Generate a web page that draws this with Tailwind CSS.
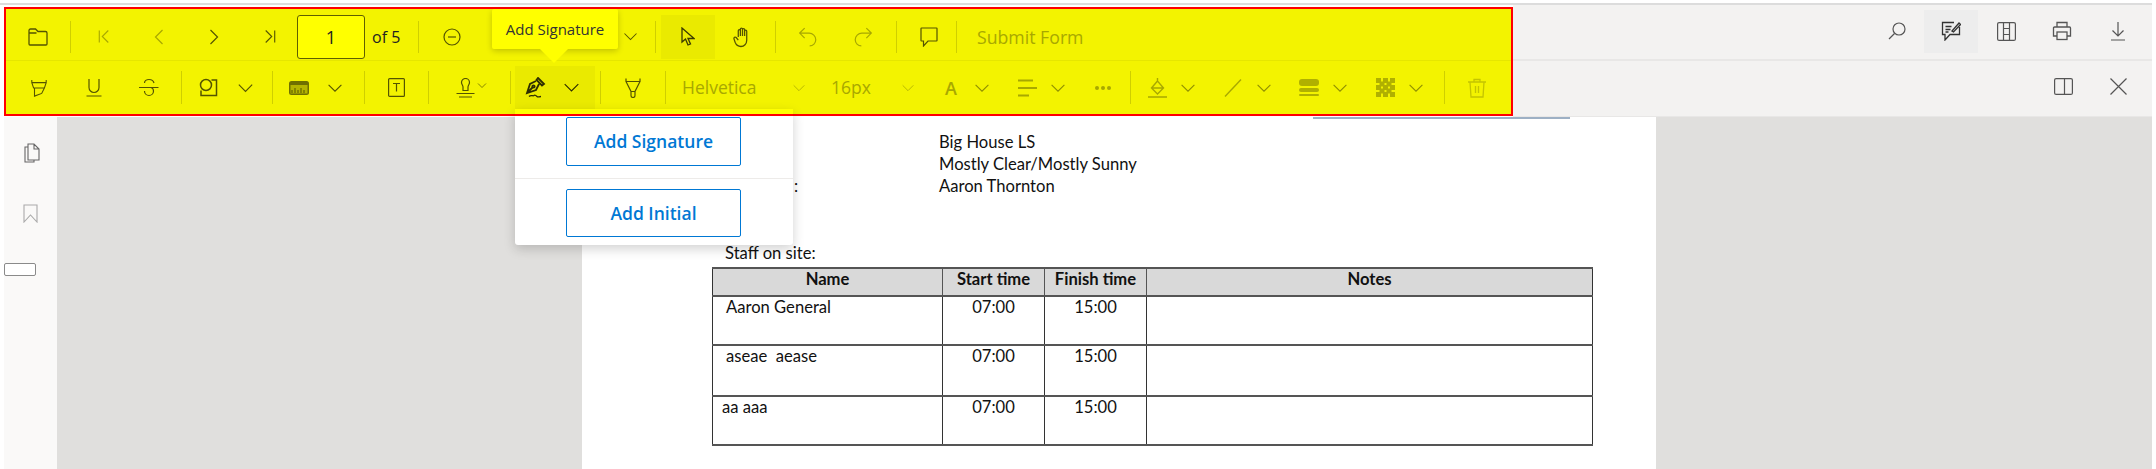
<!DOCTYPE html>
<html lang="en">
<head>
  <meta charset="UTF-8">
  <title>PDF Viewer</title>
  <script src="https://cdn.jsdelivr.net/npm/@tailwindcss/browser@4"></script>
</head>
<body class="bg-white font-['Open_Sans',sans-serif]">
  <!-- shared glyphs -->
  <svg class="hidden">
    <symbol id="chev" viewBox="0 0 20 12"><path d="M2 2l8 8 8-8" fill="none" stroke="currentColor" stroke-width="1.400"/></symbol>
  </svg>

  <div class="relative w-[2156px] h-[469px] overflow-hidden">
    <!-- toolbar area -->
    <header class="mt-[3px] w-[2152px] h-[114px] flex border-t-2 border-[#dcdcdc]">
      <div class="ml-[4px] mt-[2px] w-[1509px] h-[109px] border-2 border-[#ff0000] bg-[#f3f300] flex flex-col shrink-0">

        <!-- row 1 -->
        <div class="h-[52px] pt-[4px] flex items-center border-b border-[#e6e600] text-[#545400]">
          <div class="w-[64px] flex justify-center">
            <svg class="w-[20px] h-[18px]" viewBox="0 0 20 18" fill="none" stroke="currentColor" stroke-width="1.300"><path d="M1 5V2.500A1.500 1.500 0 0 1 2.500 1h5L10 3.500h7.500A1.500 1.500 0 0 1 19 5v11a1 1 0 0 1-1 1H2a1 1 0 0 1-1-1V5h7.500"/></svg>
          </div>
          <div class="w-px h-[32px] bg-[#cfcf00]"></div>
          <div class="ml-[5px] w-[55px] flex justify-center text-[#a8a800]">
            <svg class="w-[12px] h-[15px]" viewBox="0 0 14 16" fill="none" stroke="currentColor" stroke-width="1.300"><path d="M1.500 1v14M12 1L5 8l7 7"/></svg>
          </div>
          <div class="w-[55px] flex justify-center text-[#a8a800]">
            <svg class="w-[10px] h-[16px]" viewBox="0 0 10 16" fill="none" stroke="currentColor" stroke-width="1.200"><path d="M8.500 1L1.500 8l7 7"/></svg>
          </div>
          <div class="w-[55px] flex justify-center">
            <svg class="w-[10px] h-[16px]" viewBox="0 0 10 16" fill="none" stroke="currentColor" stroke-width="1.200"><path d="M1.500 1l7 7-7 7"/></svg>
          </div>
          <div class="ml-px w-[55px] flex justify-center">
            <svg class="w-[12px] h-[15px]" viewBox="0 0 14 16" fill="none" stroke="currentColor" stroke-width="1.300"><path d="M12.500 1v14M2 1l7 7-7 7"/></svg>
          </div>
          <div class="w-[68px] h-[44px] mt-px border border-[#5f5f00] rounded-[3px] bg-[#ffff00] flex items-center justify-center text-[18px] text-[#222]">1</div>
          <div class="ml-[7px] w-[28px] text-[16px] leading-none whitespace-nowrap text-[#222]">of 5</div>
          <div class="ml-[18px] w-px h-[32px] bg-[#cfcf00]"></div>
          <div class="ml-[5px] w-[55px] flex justify-center">
            <svg class="w-[18px] h-[18px]" viewBox="0 0 18 18" fill="none" stroke="currentColor" stroke-width="1.200"><circle cx="9" cy="9" r="8"/><path d="M5 9h8"/></svg>
          </div>
          <svg class="ml-[144px] w-[15px] h-[9px]" viewBox="0 0 20 12"><use href="#chev"/></svg>
          <div class="ml-[17px] w-px h-[32px] bg-[#cfcf00]"></div>
          <div class="ml-[5px] w-[54px] h-[44px] mt-px bg-[#eaea00] flex items-center justify-center text-[#3a3a00]">
            <svg class="w-[14px] h-[20px]" viewBox="0 0 14 20" fill="none" stroke="currentColor" stroke-width="1.300"><path d="M1 1v14l3.500-3 2.500 6 2.500-1-2.500-5.500H13z"/></svg>
          </div>
          <div class="w-[54px] flex justify-center">
            <svg class="w-[19px] h-[22px]" viewBox="0 0 18 20" fill="none" stroke="currentColor" stroke-width="1.200"><path d="M5 10V4a1 1 0 0 1 2 0V9M7 9V2.500a1 1 0 0 1 2 0V9M9 9V3a1 1 0 0 1 2 0v6M11 9V4.500a1 1 0 0 1 2 0V13c0 3.500-2.500 6-5.500 6C4.500 19 3 17.500 2 15L1 12c-.5-1.500 1-2.500 2-1.500L5 13"/></svg>
          </div>
          <div class="ml-[6px] w-px h-[32px] bg-[#cfcf00]"></div>
          <div class="ml-[4px] w-[55px] flex justify-center text-[#a8a800]">
            <svg class="w-[20px] h-[20px]" viewBox="0 0 18 18" fill="none" stroke="currentColor" stroke-width="1.100"><path d="M6 1L1.500 5.500 6 10M1.500 5.500H10a6 6 0 0 1 6 6v0a5.500 5.500 0 0 1-5.500 5.500"/></svg>
          </div>
          <div class="w-[55px] flex justify-center text-[#a8a800]">
            <svg class="w-[20px] h-[20px]" viewBox="0 0 18 18" fill="none" stroke="currentColor" stroke-width="1.100"><path d="M12 1l4.500 4.500L12 10M16.500 5.500H8a6 6 0 0 0-6 6v0A5.500 5.500 0 0 0 7.500 17"/></svg>
          </div>
          <div class="ml-[6px] w-px h-[32px] bg-[#cfcf00]"></div>
          <div class="ml-[4px] w-[55px] flex justify-center">
            <svg class="w-[20px] h-[20px]" viewBox="0 0 20 20" fill="none" stroke="currentColor" stroke-width="1.200"><path d="M2.500 1h15a.5.5 0 0 1 .5.5v12a.5.5 0 0 1-.5.5H9l-4.500 5v-5h-2a.5.5 0 0 1-.5-.5v-12a.5.500 0 0 1 .5-.5z"/></svg>
          </div>
          <div class="w-px h-[32px] bg-[#cfcf00]"></div>
          <div class="ml-[20px] mt-[2px] text-[17.7px] leading-none whitespace-nowrap text-[#a8a800]">Submit Form</div>
        </div>

        <!-- row 2 -->
        <div class="flex-1 flex items-center text-[#545400]">
          <div class="ml-[5px] w-[55px] flex justify-center">
            <svg class="w-[18px] h-[20px]" viewBox="0 0 20 20" fill="none" stroke="currentColor" stroke-width="1.200"><path d="M2 1v3h16V1M2 4l2 6h12l2-6M5 10v9l8-3 3-6"/></svg>
          </div>
          <div class="w-[55px] flex justify-center">
            <svg class="w-[16px] h-[19px]" viewBox="0 0 16 19" fill="none" stroke="currentColor" stroke-width="1.200"><path d="M3 1v8.500a5 5 0 0 0 10 0V1M.5 18h15"/></svg>
          </div>
          <div class="w-[55px] flex justify-center">
            <svg class="w-[20px] h-[19px]" viewBox="0 0 20 19" fill="none" stroke="currentColor" stroke-width="1.200"><path d="M0 9.500h19.500M15 5c-.5-2-2.500-3.500-5-3.500S5.500 3 5.500 5M5.500 13c0 2.500 2 4.500 4.500 4.500s4.500-2 4.500-4.500c0-1.500-1-3-2.500-3.500"/></svg>
          </div>
          <div class="ml-[5px] w-px h-[33px] bg-[#cfcf00]"></div>
          <div class="w-[52px] flex justify-center">
            <svg class="w-[19px] h-[19px]" viewBox="0 0 19 19" fill="none" stroke="currentColor" stroke-width="1.500"><circle cx="7" cy="7" r="5.500"/><path d="M12.500 2H17.500V17.500H2V12.500"/></svg>
          </div>
          <svg class="w-[17px] h-[10px] mx-[2.5px]" viewBox="0 0 20 12"><use href="#chev"/></svg>
          <div class="ml-[16px] w-px h-[33px] bg-[#cfcf00]"></div>
          <div class="w-[52px] flex justify-center">
            <svg class="w-[20px] h-[14px]" viewBox="0 0 20 14"><rect width="20" height="14" rx="2.500" fill="#6f6f00"/><rect x="1.500" y="4" width="17" height="8.500" fill="#b4b400"/><path d="M3 12V9M6 12V7M9 12V9M12 12V7M15 12V9" fill="none" stroke="#545400" stroke-width="1"/></svg>
          </div>
          <svg class="w-[16px] h-[10px] mx-[2px]" viewBox="0 0 20 12"><use href="#chev"/></svg>
          <div class="ml-[19px] w-px h-[33px] bg-[#cfcf00]"></div>
          <div class="w-[62px] flex justify-center">
            <svg class="w-[17px] h-[19px]" viewBox="0 0 17 19" fill="none" stroke="currentColor" stroke-width="1.200"><rect x=".6" y=".6" width="15.800" height="17.800" rx="1"/><path d="M5 5.500h7M8.500 5.500v8"/></svg>
          </div>
          <div class="ml-px w-px h-[33px] bg-[#cfcf00]"></div>
          <div class="ml-[24px] w-[24px] flex justify-center">
            <svg class="w-[21px] h-[20px]" viewBox="0 0 21 20" fill="none" stroke="currentColor" stroke-width="1.200"><path d="M8 12.500V9C8 7.500 6.500 6.500 6.500 4.500a4 4 0 0 1 8 0c0 2-1.500 3-1.500 4.500v3.500zM1.500 15.500h18M4 19h13"/></svg>
          </div>
          <svg class="w-[10px] h-[7px] -mt-[5px]" viewBox="0 0 20 12"><use href="#chev"/></svg>
          <div class="ml-[23px] w-px h-[33px] bg-[#cfcf00]"></div>
          <div class="ml-[4px] w-[80px] h-[43px] bg-[#eaea00] flex items-center text-[#2e2e00]">
            <div class="w-[40px] flex justify-center">
              <svg class="w-[21px] h-[21px]" viewBox="0 0 21 21" fill="none" stroke="currentColor" stroke-width="1.800"><path d="M13 1l6 6-2 1.500-5.500-5.500zM11 4L5 7 2 16l9-3 3-6M2 16l5.500-5.500"/><circle cx="8.500" cy="9.500" r="1.200"/><path d="M4 19.500c2-2 4 0 5-1s2 0 3 1 2 0 4 0" stroke-width="1.300"/></svg>
            </div>
            <svg class="ml-[8px] w-[17px] h-[11px]" viewBox="0 0 20 12"><use href="#chev"/></svg>
          </div>
          <div class="ml-[5px] w-px h-[33px] bg-[#cfcf00]"></div>
          <div class="w-[64px] flex justify-center">
            <svg class="w-[18px] h-[20px]" viewBox="0 0 18 20" fill="none" stroke="currentColor" stroke-width="1.200"><path d="M2 .5v3h14v-3M2 3.500l5 10v4a2 2 0 0 0 4 0v-4l5-10M7 13.500h4"/></svg>
          </div>
          <div class="w-px h-[33px] bg-[#cfcf00]"></div>

          <div class="ml-[16px] w-[75px] text-[17.5px] leading-none whitespace-nowrap text-[#a8a800]">Helvetica</div>
          <svg class="ml-[35px] w-[14px] h-[8px] text-[#b4b400]" viewBox="0 0 20 12"><use href="#chev"/></svg>
          <div class="ml-[25px] w-[41px] text-[17.5px] leading-none whitespace-nowrap text-[#a8a800]">16px</div>
          <svg class="ml-[29px] w-[14px] h-[8px] text-[#b4b400]" viewBox="0 0 20 12"><use href="#chev"/></svg>
          <div class="ml-[26px] w-[20px] text-center text-[18px] font-semibold leading-none text-[#a8a800]">A</div>
          <svg class="ml-[13px] w-[16px] h-[10px] text-[#8f8f00]" viewBox="0 0 20 12"><use href="#chev"/></svg>
          <div class="ml-[27px] w-[20px] flex justify-center text-[#a8a800]">
            <svg class="w-[19px] h-[18px]" viewBox="0 0 19 18" fill="none" stroke="currentColor" stroke-width="1.800"><path d="M0 1.500h15M0 9h19M0 16.500h11"/></svg>
          </div>
          <svg class="ml-[13px] w-[16px] h-[10px] text-[#8f8f00]" viewBox="0 0 20 12"><use href="#chev"/></svg>
          <div class="ml-[27px] w-[20px] flex justify-center gap-[2px]">
            <span class="w-[4px] h-[4px] rounded-full bg-[#a8a800]"></span><span class="w-[4px] h-[4px] rounded-full bg-[#a8a800]"></span><span class="w-[4px] h-[4px] rounded-full bg-[#a8a800]"></span>
          </div>
          <div class="ml-[17px] w-px h-[33px] bg-[#cfcf00]"></div>
          <div class="ml-[16px] w-[20px] flex justify-center text-[#a8a800]">
            <svg class="w-[19px] h-[20px]" viewBox="0 0 19 20" fill="none" stroke="currentColor" stroke-width="1.400"><path d="M9.500 0v3M9.500 3L3.500 10l6 6 6-6zM3.500 10h12M0 19h19"/></svg>
          </div>
          <svg class="ml-[13px] w-[16px] h-[10px] text-[#8f8f00]" viewBox="0 0 20 12"><use href="#chev"/></svg>
          <div class="ml-[27px] w-[20px] flex justify-center text-[#a8a800]">
            <svg class="w-[18px] h-[18px]" viewBox="0 0 18 18" fill="none" stroke="currentColor" stroke-width="1.400"><path d="M1 17.500L17 .5"/></svg>
          </div>
          <svg class="ml-[13px] w-[16px] h-[10px] text-[#8f8f00]" viewBox="0 0 20 12"><use href="#chev"/></svg>
          <div class="ml-[27px] w-[20px] flex justify-center">
            <div class="w-[20px] flex flex-col gap-[2px]">
              <div class="h-[7px] rounded-[3px] bg-[#b0b000]"></div>
              <div class="h-[4px] rounded-[2px] bg-[#b0b000]"></div>
              <div class="h-[2px] rounded-[1px] bg-[#b0b000]"></div>
            </div>
          </div>
          <svg class="ml-[13px] w-[16px] h-[10px] text-[#8f8f00]" viewBox="0 0 20 12"><use href="#chev"/></svg>
          <div class="ml-[27px] w-[20px] flex justify-center">
            <svg class="w-[19px] h-[19px]" viewBox="0 0 19 19" fill="#b0b000"><path d="M0 0h5v5H0zM7 0h5v5H7zM14 0h5v5h-5zM3.500 3.500h5v5h-5zM10.500 3.500h5v5h-5zM0 7h5v5H0zM7 7h5v5H7zM14 7h5v5h-5zM3.500 10.500h5v5h-5zM10.500 10.500h5v5h-5zM0 14h5v5H0zM7 14h5v5H7zM14 14h5v5h-5z"/></svg>
          </div>
          <svg class="ml-[13px] w-[16px] h-[10px] text-[#8f8f00]" viewBox="0 0 20 12"><use href="#chev"/></svg>
          <div class="ml-[20px] w-px h-[33px] bg-[#cfcf00]"></div>
          <div class="ml-[22px] w-[20px] flex justify-center text-[#c4c400]">
            <svg class="w-[18px] h-[20px]" viewBox="0 0 18 20" fill="none" stroke="currentColor" stroke-width="1.300"><path d="M0 4h18M6 4V1.500h6V4M2 4l1 15h12l1-15M7.500 8v7M10.500 8v7"/></svg>
          </div>
        </div>
      </div>

      <!-- right side of the toolbar -->
      <div class="flex-1 flex flex-col bg-[#f3f2f1] border-b border-[#e8e7e6] text-[#555]">
        <div class="h-[56px] pb-[2px] border-b-2 border-[#e8e7e6] flex items-center">
          <div class="ml-[357px] w-[54px] flex justify-center">
            <svg class="w-[18px] h-[18px]" viewBox="0 0 18 18" fill="none" stroke="currentColor" stroke-width="1.200"><circle cx="11" cy="7" r="6"/><path d="M6.500 11.500L1 17"/></svg>
          </div>
          <div class="w-[54px] h-[43px] bg-[#ededed] flex items-center justify-center text-[#333]">
            <svg class="w-[20px] h-[20px]" viewBox="0 0 20 20" fill="none" stroke="currentColor" stroke-width="1.300"><path d="M13 1.500H1.500v12H4V19l5-5.500h9.500V6M4.500 5.500h6M4.500 8.500h5M4.500 11h3M11 10l7-8 1.500 1.500L12.500 11z"/></svg>
          </div>
          <div class="w-[56px] flex justify-center">
            <svg class="w-[19px] h-[19px]" viewBox="0 0 19 19" fill="none" stroke="currentColor" stroke-width="1.200"><rect x=".6" y=".6" width="17.800" height="17.800" rx="1.500"/><path d="M6.500 1v17M12.500 1v17M6.500 6.500h6M6.500 12.500h6"/></svg>
          </div>
          <div class="w-[56px] flex justify-center">
            <svg class="w-[20px] h-[20px]" viewBox="0 0 20 20" fill="none" stroke="currentColor" stroke-width="1.300"><path d="M5 6V1.500h10V6M5 15H1.500V7a1 1 0 0 1 1-1h15a1 1 0 0 1 1 1v8H15"/><rect x="5" y="11" width="10" height="7.500"/></svg>
          </div>
          <div class="w-[55px] flex justify-center">
            <svg class="w-[14px] h-[19px]" viewBox="0 0 14 19" fill="none" stroke="currentColor" stroke-width="1.200"><path d="M7 0v14M1.500 8.500L7 14l5.500-5.500M0 18h14"/></svg>
          </div>
        </div>
        <div class="flex-1 pb-[4px] flex items-center">
          <div class="ml-[522px] w-[56px] flex justify-center">
            <svg class="w-[19px] h-[17px]" viewBox="0 0 19 17" fill="none" stroke="currentColor" stroke-width="1.200"><rect x=".6" y=".6" width="17.800" height="15.800" rx="1.500"/><path d="M10.500 1v15"/></svg>
          </div>
          <div class="w-[55px] flex justify-center">
            <svg class="w-[17px] h-[17px]" viewBox="0 0 17 17" fill="none" stroke="currentColor" stroke-width="1.200"><path d="M.5.5l16 16M16.500.5l-16 16"/></svg>
          </div>
        </div>
      </div>
    </header>

    <!-- viewer body -->
    <main class="w-[2152px] h-[352px] flex">
      <aside class="ml-[4px] w-[53px] bg-[#faf9f8] flex flex-col items-center text-[#666] shrink-0">
        <svg class="mt-[26px] w-[18px] h-[20px]" viewBox="0 0 18 20" fill="none" stroke="currentColor" stroke-width="1.100"><path d="M6 1h6l5 5v11H6zM12 1v5h5M6 4H3v15h9v-2"/></svg>
        <svg class="mt-[41px] w-[15px] h-[19px] text-[#aaa]" viewBox="0 0 15 19" fill="none" stroke="currentColor" stroke-width="1.100"><path d="M1 1h13v17L7.500 11 1 18z"/></svg>
        <div class="mt-[40px] -ml-[21px] w-[32px] h-[13px] bg-white border border-[#8a8a8a] rounded-[2px]"></div>
      </aside>
      <div class="flex-1 bg-[#e0dfdd] pl-[525px]">
        <section class="w-[1074px] h-full bg-white relative font-['Lato',sans-serif] text-[16.6px] leading-[22px] text-[#111]">
          <div class="h-[2px] ml-[731px] w-[257px] bg-[#9db0c4]"></div>
          <div class="pt-[12px]">
            <p class="pl-[357px]">Big House LS</p>
            <p class="pl-[357px]">Mostly Clear/Mostly Sunny</p>
            <div class="flex">
              <span class="ml-[212px] w-[145px]">:</span>
              <span>Aaron Thornton</span>
            </div>
          </div>
          <p class="mt-[45px] ml-[143px]">Staff on site:</p>
          <table class="mt-[3px] ml-[130px] w-[881px] table-fixed border-collapse border-x border-y-2 border-x-[#333] border-y-[#555] leading-[21px]">
            <colgroup><col class="w-[230px]"><col class="w-[102px]"><col class="w-[102px]"><col></colgroup>
            <thead>
              <tr class="h-[28px] bg-[#d9d9d9] text-center border-b-2 border-[#555]">
                <th class="border-r border-[#555] pb-[5px] font-bold">Name</th><th class="border-r border-[#555] pb-[5px] font-bold">Start time</th><th class="border-r border-[#555] pb-[5px] font-bold">Finish time</th><th class="pb-[5px] font-bold">Notes</th>
              </tr>
            </thead>
            <tbody>
              <tr class="h-[49px] align-top border-b-2 border-[#555]">
                <td class="border-r border-[#333] pl-[13px]">Aaron General</td><td class="border-r border-[#333] text-center">07:00</td><td class="border-r border-[#333] text-center">15:00</td><td></td>
              </tr>
              <tr class="h-[51px] align-top border-b-2 border-[#555]">
                <td class="border-r border-[#333] pl-[13px]">aseae&nbsp; aease</td><td class="border-r border-[#333] text-center">07:00</td><td class="border-r border-[#333] text-center">15:00</td><td></td>
              </tr>
              <tr class="h-[49px] align-top">
                <td class="border-r border-[#333] pl-[9px]">aa aaa</td><td class="border-r border-[#333] text-center">07:00</td><td class="border-r border-[#333] text-center">15:00</td><td></td>
              </tr>
            </tbody>
          </table>
        </section>
      </div>
    </main>

    <!-- tooltip over the toolbar -->
    <div class="absolute left-[492px] top-[9px] w-[126px] h-[40px] bg-[#ffff00] rounded-[2px] shadow-[0_2px_6px_rgba(0,0,0,0.2)] flex items-center justify-center text-[15px] text-[#333] whitespace-nowrap">
      Add Signature
      <span class="absolute left-[48px] top-[40px] w-0 h-0 border-x-[14px] border-x-transparent border-t-[14px] border-t-[#ffff00]"></span>
    </div>

    <!-- signature dropdown -->
    <div class="absolute left-[515px] top-[109px] w-[278px] h-[136px] bg-white rounded-b-[3px] shadow-[0_4px_12px_rgba(0,0,0,0.18)] flex flex-col">
      <div class="h-[5px] bg-[#ffff00]"></div>
      <div class="h-[2px] bg-[#ff0000]"></div>
      <button class="mt-px ml-[51px] w-[175px] h-[49px] border border-[#0078d4] rounded-[2px] text-[17.5px] font-semibold text-[#0078d4]">Add Signature</button>
      <div class="mt-[12px] h-px bg-[#edebe9]"></div>
      <button class="mt-[10px] ml-[51px] w-[175px] h-[48px] border border-[#0078d4] rounded-[2px] text-[17.5px] font-semibold text-[#0078d4]">Add Initial</button>
    </div>
  </div>
</body>
</html>
